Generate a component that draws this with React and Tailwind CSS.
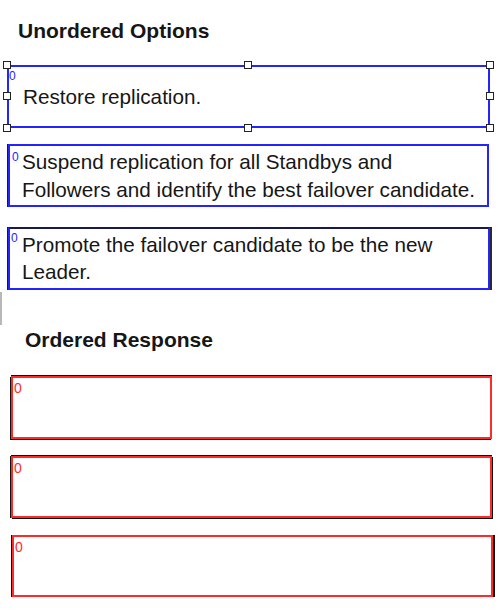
import React from 'react';

function Handle({ className }) {
  return (
    <span
      className={`absolute w-[8px] h-[8px] bg-white border-[1.5px] border-[#222] ${className}`}
    />
  );
}

function OptionBox({ className, supClass, children, textClass }) {
  return (
    <div className={`relative bg-white border-2 border-[#2424ff] ${className}`}>
      <span className={`absolute text-[#2424ff] leading-none ${supClass}`}>0</span>
      <div className={textClass}>{children}</div>
    </div>
  );
}

function ResponseBox({ className }) {
  return (
    <div className={`relative bg-white border-2 border-[#ff2b2b] h-[62px] w-[481px] ${className}`}>
      <span className="absolute left-[1px] top-[3px] text-[14px] leading-none text-[#ff2b2b]">0</span>
    </div>
  );
}

export default function App() {
  return (
    <div
      className="w-[500px] h-[614px] bg-white overflow-hidden text-[#161616] flex flex-col pt-[19px]"
      style={{ fontFamily: '"Liberation Sans", Arial, sans-serif' }}
    >
      {/* Unordered Options */}
      <section className="flex flex-col">
        <h2 className="pl-[18px] text-[21px] leading-[24px] font-bold">Unordered Options</h2>

        <div className="flex flex-col gap-[16px] mt-[22px] pl-[7px]">
          {/* selected option, with resize handles */}
          <div className="relative w-[483px]">
            <OptionBox
              className="h-[63px] flex items-center"
              supClass="left-[0px] top-[3px] text-[12px]"
              textClass="pl-[14px] pt-[1px] text-[20.7px] leading-[24px]"
            >
              Restore replication.
            </OptionBox>
            <Handle className="left-[-4px] top-[-4px]" />
            <Handle className="left-[237px] top-[-4px]" />
            <Handle className="right-[-4px] top-[-4px]" />
            <Handle className="left-[-4px] top-[27px]" />
            <Handle className="right-[-4px] top-[27px]" />
            <Handle className="left-[-4px] bottom-[-4px]" />
            <Handle className="left-[237px] bottom-[-4px]" />
            <Handle className="right-[-4px] bottom-[-4px]" />
          </div>

          <div className="flex flex-col gap-[20px] pl-[1px]">
            <OptionBox
              className="w-[481px] h-[63px] shadow-[-1px_0_0_#1a1a2a]"
              supClass="left-[2px] top-[5px] text-[12px]"
              textClass="pl-[12px] pr-[6px] pt-[2px] text-[20.7px] leading-[28px]"
            >
              Suspend replication for all Standbys and Followers and identify the best failover candidate.
            </OptionBox>

            <OptionBox
              className="w-[482px] h-[63px] border-t-[#1a1a4a] shadow-[-1px_0_0_#1a1a2a,2px_0_0_#2a2a2a]"
              supClass="left-[1px] top-[3px] text-[12px]"
              textClass="pl-[12px] pr-[6px] pt-[2px] text-[20.7px] leading-[27px]"
            >
              Promote the failover candidate to be the new Leader.
            </OptionBox>
          </div>
        </div>
      </section>

      <div className="mt-[2px] w-[2px] h-[33px] bg-[#b8b8b8]" />

      {/* Ordered Response */}
      <section className="flex flex-col mt-[3px]">
        <h2 className="pl-[25px] text-[21px] leading-[24px] font-bold">Ordered Response</h2>

        <div className="flex flex-col gap-[17px] mt-[24px] pl-[11px]">
          <ResponseBox className="h-[63px] shadow-[-1px_1px_0_#111,0_-1px_0_#111]" />
          <ResponseBox className="shadow-[-1px_0_0_#111,1px_1px_0_#111,0_-1px_0_#111]" />
          <ResponseBox className="ml-[1px] shadow-[-1px_0_0_#111,2px_0_0_#111]" />
        </div>
      </section>
    </div>
  );
}
